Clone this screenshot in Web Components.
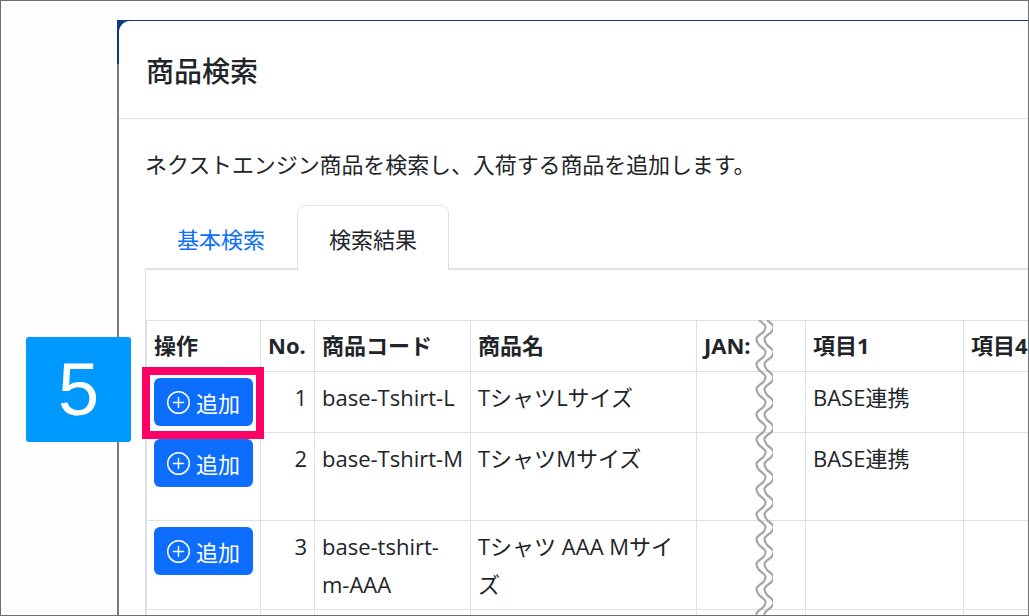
<!DOCTYPE html>
<html lang="ja">
<head>
<meta charset="utf-8">
<title>商品検索</title>
<style>
html,body{margin:0;padding:0;background:#fff}
body{width:1029px;height:616px;overflow:hidden;font-family:"Open Sans","Noto Sans CJK JP",sans-serif;color:#212529}
</style>
</head>
<body>
<shot-frame>
  <search-modal heading="商品検索">
    <p>ネクストエンジン商品を検索し、入荷する商品を追加します。</p>
    <result-tabs></result-tabs>
    <result-table></result-table>
  </search-modal>
</shot-frame>
<script>
class ShotFrame extends HTMLElement{
  constructor(){super();this.attachShadow({mode:'open'}).innerHTML=`
  <style>
  :host{display:block;position:relative;box-sizing:border-box;width:1029px;height:616px;border:1px solid #6e6e6e;overflow:hidden;background:#fefefe}
  .stage{padding:19px 0 0 116px;height:100%;box-sizing:border-box}
  .backdrop{position:relative;height:100%;border-left:2px solid #7a7a7a;margin-right:-400px}
  .backdrop::before{content:"";position:absolute;left:-2px;top:0;right:0;height:2px;background:#0d3a80}
  .backdrop::after{content:"";position:absolute;left:-2px;top:0;width:10px;height:44px;background:#0d3a80;z-index:0}
  .modal{position:relative;z-index:1;padding-top:1px}
  .badge{position:absolute;left:25px;top:336px;width:105px;height:105px;border-radius:3px;background:#0099ff;color:#fff;font:74px/105px "Liberation Sans",sans-serif;text-align:center;z-index:3}
  .mark{position:absolute;left:141px;top:366px;width:122px;height:72px;box-sizing:border-box;border:8px solid #ff0066;z-index:3}
  </style>
  <div class="stage"><div class="backdrop"><div class="modal"><slot></slot></div></div></div>
  <div class="badge">5</div>
  <div class="mark"></div>`;}
}
class SearchModal extends HTMLElement{
  constructor(){super();this.attachShadow({mode:'open'}).innerHTML=`
  <style>
  :host{display:block;background:#fff;border-radius:11px 0 0 0;height:620px}
  header{height:98px;box-sizing:border-box;border-bottom:1px solid #dee2e6;padding:0 0 0 27px;display:flex;align-items:center;font-size:28px;font-weight:500;font-family:"Noto Sans CJK JP",sans-serif}
  .body{padding:26px 0 0 26px}
  ::slotted(p){margin:0 0 22px;font-size:22px;line-height:38px;font-family:"Open Sans","Noto Sans CJK JP",sans-serif;letter-spacing:-.1px}
  </style>
  <header></header><div class="body"><slot></slot></div>`;
  this.shadowRoot.querySelector('header').textContent=this.getAttribute('heading')||'商品検索';}
  connectedCallback(){this.shadowRoot.querySelector('header').textContent=this.getAttribute('heading');}
}
class ResultTabs extends HTMLElement{
  constructor(){super();this.attachShadow({mode:'open'}).innerHTML=`
  <style>
  :host{display:flex;height:65px;box-sizing:border-box;border-bottom:2px solid #dee2e6;font-size:22px;font-family:"Noto Sans CJK JP",sans-serif}
  a{display:flex;align-items:center;justify-content:center;box-sizing:border-box;height:65px;width:152px;padding-bottom:0;margin-top:0}
  .off{color:#0d6efd;width:152px}
  .on{color:#212529;width:152px;background:#fff;border:1px solid #dee2e6;border-bottom:0;border-radius:9px 9px 0 0;position:relative}
  </style>
  <a class="off">基本検索</a><a class="on">検索結果</a>`;}
}
const rows=[
 ['1','base-Tshirt-L','Tシャツ<wbr>Lサイズ','BASE連携',61],
 ['2','base-Tshirt-M','Tシャツ<wbr>Mサイズ','BASE連携',88],
 ['3','base-tshirt-m-AAA','Tシャツ AAA Mサイズ','',89],
 ['','','','',60]
];
class AddButton extends HTMLElement{
  constructor(){super();this.attachShadow({mode:'open'}).innerHTML=`
  <style>
  :host{display:inline-flex;box-sizing:border-box;width:99px;height:48px;background:#0d6efd;color:#fff;border-radius:6px;align-items:center;justify-content:center;gap:6px;font-size:22px;font-family:"Noto Sans CJK JP",sans-serif;vertical-align:top}
  svg{width:23px;height:23px;display:block}
  </style>
  <svg viewBox="0 0 16 16" fill="currentColor"><path d="M8 15A7 7 0 1 1 8 1a7 7 0 0 1 0 14zm0 1A8 8 0 1 0 8 0a8 8 0 0 0 0 16z"/><path d="M8 4a.5.5 0 0 1 .5.5v3h3a.5.5 0 0 1 0 1h-3v3a.5.5 0 0 1-1 0v-3h-3a.5.5 0 0 1 0-1h3v-3A.5.5 0 0 1 8 4z"/></svg><span>追加</span>`;}
}
class ResultTable extends HTMLElement{
  constructor(){super();
  const body=rows.map(r=>`<tr style="height:${r[4]}px">
    <td class="op">${r[0]?'<add-button></add-button>':''}</td><td class="n">${r[0]}</td><td>${r[1]}</td><td>${r[2]}</td><td></td><td>${r[3]}</td><td></td></tr>`).join('');
  this.attachShadow({mode:'open'}).innerHTML=`
  <style>
  :host{display:block;position:relative;box-sizing:border-box;width:1000px;height:400px;padding-top:50px;border-left:1px solid #dee2e6;font-size:22px;line-height:38px}
  table{border-collapse:collapse;table-layout:fixed;width:1117px;font-family:"Open Sans","Noto Sans CJK JP",sans-serif}
  th,td{border:1px solid #dee2e6;padding:6px 7px;vertical-align:top;overflow:hidden;word-break:normal;font-weight:400;text-align:left}
  th{font-weight:700;white-space:nowrap;padding:5px 7px 6px}
  .n{text-align:right}
  .op{padding:6px 0 0 7px}
  .wave{position:absolute;left:608px;top:50px;width:19px;height:300px;z-index:2}
  </style>
  <table><colgroup><col style="width:114px"><col style="width:54px"><col style="width:156px"><col style="width:226px"><col style="width:109px"><col style="width:158px"><col style="width:300px"></colgroup>
  <thead><tr style="height:51px"><th>操作</th><th>No.</th><th>商品コード</th><th>商品名</th><th>JAN:</th><th>項目1</th><th>項目4</th></tr></thead>
  <tbody>${body}</tbody></table>
  <svg class="wave" viewBox="0 0 19 300"></svg>`;
  let d1='',d2='',fill='';
  const P=25, build=(x)=>{let d=`M${x} 0`;for(let y=0;y<300;y+=P){d+=` C${x+8} ${y+6} ${x+8} ${y+7} ${x+4} ${y+12.5} C${x-4} ${y+18} ${x-4} ${y+19} ${x} ${y+25}`;}return d;};
  const svg=this.shadowRoot.querySelector('svg');
  const a=build(5),b=build(13);
  svg.innerHTML=`<path d="${a} L13 300 ${b.replace(/^M13 0/,'')}" fill="none"/>
  <path d="${a}" fill="none" stroke="#a6a6a6" stroke-width="2.2"/><path d="${b}" fill="none" stroke="#a6a6a6" stroke-width="2.2"/>`;
  }
}
customElements.define('shot-frame',ShotFrame);
customElements.define('search-modal',SearchModal);
customElements.define('result-tabs',ResultTabs);
customElements.define('add-button',AddButton);
customElements.define('result-table',ResultTable);
</script>
</body>
</html>
